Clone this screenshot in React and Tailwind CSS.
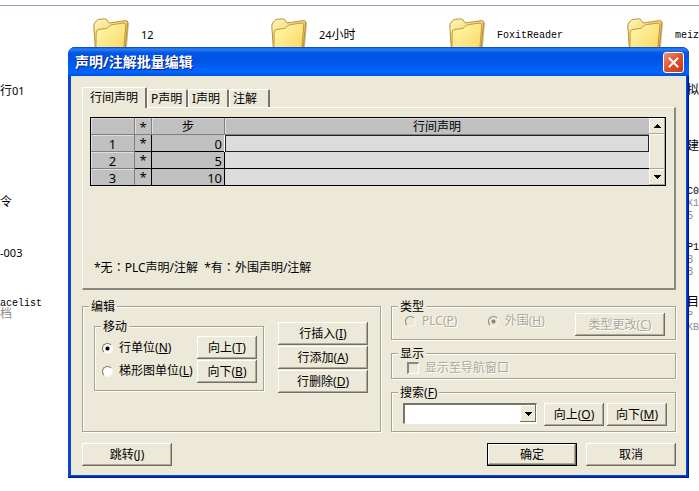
import { useState } from 'react'

const FOLDERS = [
    { name: '12', pos: 'left-[93px]' },
    { name: '24小时', pos: 'left-[271px]' },
    { name: 'FoxitReader', pos: 'left-[449px]' },
    { name: 'meiz', pos: 'left-[627px]' },
]

// files of the explorer window that stick out beside the dialog
const FILES = [
    { text: '行01', pos: 'left-0 top-[83px]' },
    { text: '令', pos: 'left-0 top-[195px]' },
    { text: '-003', pos: 'left-0 top-[245px]' },
    { text: 'acelist', pos: 'left-0 top-[295px]' },
    { text: '档', pos: 'left-0 top-[307px]', dim: true },
    { text: '拟', pos: 'left-[687px] top-[83px]' },
    { text: '建', pos: 'left-[687px] top-[139px]' },
    { text: 'C0', pos: 'left-[687px] top-[183px]' },
    { text: 'X1', pos: 'left-[687px] top-[195px]', dim: true },
    { text: '5', pos: 'left-[687px] top-[207px]', dim: true },
    { text: 'P1', pos: 'left-[687px] top-[239px]' },
    { text: '3', pos: 'left-[687px] top-[251px]', dim: true },
    { text: '3', pos: 'left-[687px] top-[263px]', dim: true },
    { text: '目', pos: 'left-[687px] top-[295px]' },
    { text: 'P', pos: 'left-[687px] top-[307px]', dim: true },
    { text: 'KB', pos: 'left-[687px] top-[319px]', dim: true },
]

const ROWS = [
    { id: 1, step: 0, text: '' },
    { id: 2, step: 5, text: '' },
    { id: 3, step: 10, text: '' },
]

const TABS = ['行间声明', 'P声明', 'I声明', '注解']

// chinese glyphs are 12px, latin ones sit on a 6px grid
function DesktopText({ children }) {
    return children.split(/([\x20-\x7e]+)/).map((part, i) => {
        if (/^[-\d]+$/.test(part)) {
            return <span key={i} className="font-['Noto_Sans',sans-serif] text-[11px]">{part}</span>
        }
        if (/^[\x20-\x7e]+$/.test(part)) {
            return <span key={i} className="text-[10px]">{part}</span>
        }
        return part
    })
}

function FolderIcon() {
    return (
        <svg width="38" height="36" viewBox="0 0 38 36" className="shrink-0">
            <defs>
                <linearGradient id="folderBack" x1="0" y1="0" x2="1" y2="1">
                    <stop offset="0" stopColor="#fff8b8" />
                    <stop offset="1" stopColor="#e8b848" />
                </linearGradient>
                <linearGradient id="folderFront" x1="0" y1="0" x2="1" y2="1">
                    <stop offset="0" stopColor="#fff9b4" />
                    <stop offset="1" stopColor="#fbd65c" />
                </linearGradient>
            </defs>
            <path d="M34.5 4 L36 5 L33.5 34 L30 34 Z" fill="#9a8a60" opacity="0.6" />
            <path d="M2.5 33 L0.8 8 Q0.6 6 2.5 4 L3.6 2.6 Q4.5 1.5 6.5 1.3 L11.5 0.8 Q14 0.8 14.8 3 L16.2 5 L32.5 2.6 Q35 2.4 34.7 5 L32 33 Z" fill="url(#folderBack)" stroke="#b98f35" strokeWidth="1" />
            <path d="M2.8 34 L3.2 14 Q3.5 11.6 6 11.4 L13 10.5 Q14.6 10.2 15.6 8.8 Q17 7 19.5 6.6 L31 5 Q33 4.8 32.8 7 L30.5 34 Z" fill="url(#folderFront)" stroke="#c9942e" strokeWidth="1" />
        </svg>
    )
}

function Button({ children, primary, disabled, className = '' }) {
    return (
        <button
            type="button"
            disabled={disabled}
            className={`h-[23px] flex items-center justify-center whitespace-nowrap bg-[#ece9d8] disabled:text-[#aca899] disabled:[text-shadow:1px_1px_0_#fff] shadow-[inset_-1px_-1px_0_#716f64,inset_1px_1px_0_#fff,inset_-2px_-2px_0_#aca899] ${primary ? 'border border-black' : ''} ${className}`}
        >
            <span>{children}</span>
        </button>
    )
}

function Group({ title, children, className = '' }) {
    return (
        <fieldset className={`min-w-0 border border-[#a5a292] shadow-[1px_1px_0_#fff,inset_1px_1px_0_#fff] ${className}`}>
            <legend className="ml-[6px] px-[2px] h-[13px] leading-[13px] bg-[#ece9d8]">{title}</legend>
            {children}
        </fieldset>
    )
}

function Radio({ label, ...props }) {
    return (
        <label className="flex items-center gap-[6px] h-4 whitespace-nowrap has-disabled:text-[#aca899] has-disabled:[text-shadow:1px_1px_0_#fff]">
            <input
                type="radio"
                className="appearance-none shrink-0 w-[11px] h-[11px] rounded-full bg-white border border-t-[#77756a] border-l-[#77756a] border-b-[#f8f6ee] border-r-[#f8f6ee] checked:bg-[radial-gradient(circle,#000_1.5px,#fff_2.5px)] disabled:bg-[#ece9d8] disabled:border-t-[#8a887c] disabled:border-l-[#8a887c] disabled:checked:bg-[radial-gradient(circle,#8a887c_1.5px,#ece9d8_2.5px)]"
                {...props}
            />
            <span>{label}</span>
        </label>
    )
}

function Key({ k }) {
    return <>(<u>{k}</u>)</>
}

// colon that sits in the middle of its square
function Colon() {
    return <span className="font-['Noto_Sans_CJK_TC',sans-serif]">：</span>
}

function ScrollButton({ up }) {
    return (
        <button
            type="button"
            aria-label={up ? 'up' : 'down'}
            className="h-4 w-4 flex items-center justify-center bg-[#ece9d8] shadow-[inset_-1px_-1px_0_#aca899,inset_1px_1px_0_#fff]"
        >
            <svg width="7" height="4" viewBox="0 0 7 4" shapeRendering="crispEdges">
                <path d={up ? 'M0 4 L3.5 0 L7 4 Z' : 'M0 0 L7 0 L3.5 4 Z'} />
            </svg>
        </button>
    )
}

function StatementTable() {
    const head = 'font-normal pt-[2px] bg-[#c0c0c0] border-r border-b border-[#808080] shadow-[inset_1px_1px_0_#dfdfdf]'
    const cell = 'border-r border-b border-black group-last:border-b-0'
    return (
        <div className="flex border border-black bg-[#ece9d8]">
            <table className="flex-1 table-fixed border-separate border-spacing-0 text-[13px] leading-[14px]">
                <colgroup>
                    <col className="w-[44px]" />
                    <col className="w-[17px]" />
                    <col className="w-[73px]" />
                    <col />
                </colgroup>
                <thead>
                    <tr className="h-[17px]">
                        <th className={head}></th>
                        <th className={head}>*</th>
                        <th className={`${head} text-xs leading-[14px]`}>步</th>
                        <th className={`${head} text-xs leading-[14px] border-r-0`}>行间声明</th>
                    </tr>
                </thead>
                <tbody>
                    {ROWS.map((row, i) => (
                        <tr key={row.id} className="group h-[17px] last:h-4">
                            <th className={`${head} group-last:border-b-0`}>{row.id}</th>
                            <td className={`${cell} bg-[#c0c0c0] text-center`}>*</td>
                            <td className={`${cell} bg-[#c0c0c0] text-right pt-px pr-[2px]`}>{row.step}</td>
                            <td
                                className={
                                    i === 0
                                        ? 'bg-[#dcdcdc] border border-[#222] shadow-[0_1px_0_#fff,-1px_0_0_#fff]'
                                        : `${cell} bg-[#dcdcdc] border-r-0`
                                }
                            >
                                {row.text}
                            </td>
                        </tr>
                    ))}
                </tbody>
            </table>
            <div className="w-4 flex flex-col">
                <ScrollButton up />
                <div className="flex-1 bg-[#ece9d8] shadow-[inset_-1px_-1px_0_#aca899,inset_1px_1px_0_#fff]" />
                <ScrollButton />
            </div>
        </div>
    )
}

function Dialog() {
    const [tab, setTab] = useState(0)
    const [unit, setUnit] = useState('row')

    return (
        <div
            role="dialog"
            className="absolute left-[68px] right-[10px] top-[47px] rounded-t-[7px] overflow-hidden bg-[#0b46d6] shadow-[inset_-1px_-1px_0_#00198c,inset_-2px_-2px_0_#0030b8] font-['Noto_Sans','Noto_Sans_CJK_SC',sans-serif] text-xs leading-4 text-black"
        >
            <div className="h-[29px] pl-[7px] pr-[5px] flex items-center justify-between bg-[linear-gradient(#0a3fc0,#2b82f8_2px,#0055e5_6px,#0055e5_14px,#0066ff_25px,#0050e0)]">
                <h1 className="text-sm font-bold text-white [text-shadow:1px_1px_0_#0a1883]">声明/注解批量编辑</h1>
                <button
                    type="button"
                    aria-label="close"
                    className="mt-[2px] w-[21px] h-[21px] flex items-center justify-center rounded-[3px] border border-white bg-linear-to-br from-[#ee8f70] via-[#e0502c] to-[#c83a10]"
                >
                    <svg width="11" height="11" viewBox="0 0 11 11" stroke="#fff" strokeWidth="2" strokeLinecap="square">
                        <path d="M1.5 1.5 L9.5 9.5 M9.5 1.5 L1.5 9.5" />
                    </svg>
                </button>
            </div>

            <div className="mx-[3px] mb-[3px] bg-[#ece9d8] pt-[11px] pl-[11px] pr-[10px] pb-[9px]">
                <div role="tablist" className="flex items-end">
                    {TABS.map((name, i) => (
                        <button
                            key={name}
                            type="button"
                            role="tab"
                            aria-selected={i === tab}
                            onClick={() => setTab(i)}
                            className={`relative text-left whitespace-nowrap bg-[#ece9d8] border-t border-l border-t-white border-l-white border-r-2 border-r-[#77756a] rounded-t-[2px] ${i === tab ? 'z-10 h-[21px] -mb-px px-[7px]' : 'h-[18px] min-w-[41px] px-[3px]'}`}
                        >
                            {name}
                        </button>
                    ))}
                </div>

                <div
                    role="tabpanel"
                    className="min-h-[183px] flex flex-col justify-between border-t border-l border-white border-r-2 border-b-2 border-r-[#8a887c] border-b-[#8a887c] pt-[9px] pl-[7px] pr-2 pb-3"
                >
                    <StatementTable />
                    <p className="pl-1 whitespace-pre">*无<Colon />PLC声明/注解  *有<Colon />外围声明/注解</p>
                </div>

                <div className="mt-[10px] grid grid-cols-[299fr_285fr] gap-[10px]">
                    <Group title="编辑">
                        <div className="pt-[7px] pl-[11px] pr-3 flex items-start justify-between">
                            <Group title="移动" className="w-[170px] pb-[7px]">
                                <div className="pt-[3px] pl-[7px] pr-[6px] flex justify-between">
                                    <div className="flex flex-col gap-[7px] pt-[4px]">
                                        <Radio name="unit" checked={unit === 'row'} onChange={() => setUnit('row')} label={<>行单位<Key k="N" /></>} />
                                        <Radio name="unit" checked={unit === 'ladder'} onChange={() => setUnit('ladder')} label={<>梯形图单位<Key k="L" /></>} />
                                    </div>
                                    <div className="flex flex-col gap-px">
                                        <Button className="w-[60px]">向上<Key k="T" /></Button>
                                        <Button className="w-[60px]">向下<Key k="B" /></Button>
                                    </div>
                                </div>
                            </Group>
                            <div className="pt-[2px] flex flex-col gap-px">
                                <Button className="w-[90px]">行插入<Key k="I" /></Button>
                                <Button className="w-[90px]">行添加<Key k="A" /></Button>
                                <Button className="w-[90px]">行删除<Key k="D" /></Button>
                            </div>
                        </div>
                    </Group>

                    <div className="flex flex-col gap-[7px]">
                        <Group title="类型" className="pb-[3px]">
                            <div className="pl-[13px] pr-[10px] flex items-start justify-between">
                                <Radio name="kind" disabled label={<>PLC<Key k="P" /></>} />
                                <Radio name="kind" disabled defaultChecked label={<>外围<Key k="H" /></>} />
                                <Button disabled className="w-[90px]">类型更改<Key k="C" /></Button>
                            </div>
                        </Group>
                        <Group title="显示" className="pb-[3px]">
                            <label className="ml-[15px] h-[15px] flex items-center gap-[6px] text-[#aca899] [text-shadow:1px_1px_0_#fff]">
                                <input
                                    type="checkbox"
                                    disabled
                                    className="appearance-none w-3 h-3 border-t-2 border-l-2 border-r border-b border-t-[#8a887c] border-l-[#8a887c] border-r-white border-b-white"
                                />
                                显示至导航窗口
                            </label>
                        </Group>
                        <Group title={<label htmlFor="search">搜索<Key k="F" /></label>} className="pb-[5px]">
                            <div className="pt-[4px] pl-[11px] pr-[8px] flex items-start">
                                <div className="relative flex-1 mr-[7px]">
                                    <select
                                        id="search"
                                        className="block appearance-none w-full h-[21px] bg-white border-t-2 border-l-2 border-r border-b border-t-[#77756a] border-l-[#77756a] border-r-white border-b-white"
                                    >
                                        <option></option>
                                    </select>
                                    <span className="pointer-events-none absolute right-px top-[2px] w-4 h-[17px] flex items-center justify-center bg-[#ece9d8] shadow-[inset_-1px_-1px_0_#716f64,inset_1px_1px_0_#fff]">
                                        <svg width="7" height="4" viewBox="0 0 7 4" shapeRendering="crispEdges">
                                            <path d="M0 0 L7 0 L3.5 4 Z" />
                                        </svg>
                                    </span>
                                </div>
                                <Button className="w-[60px] mr-[3px]">向上<Key k="O" /></Button>
                                <Button className="w-[60px]">向下<Key k="M" /></Button>
                            </div>
                        </Group>
                    </div>
                </div>

                <div className="mt-[11px] flex gap-[9px]">
                    <Button className="w-[90px] mr-auto">跳转<Key k="J" /></Button>
                    <Button primary className="w-[90px]">确定</Button>
                    <Button className="w-[90px]">取消</Button>
                </div>
            </div>
        </div>
    )
}

export default function App() {
    return (
        <main className="relative h-screen overflow-hidden bg-white font-['Liberation_Mono','Noto_Sans_CJK_SC',monospace] text-xs leading-4 text-black">
            <div className="h-[6px] border-b border-[#9a9cc4]" />
            {FOLDERS.map((f) => (
                <div key={f.name} className={`absolute top-[18px] flex gap-[10px] ${f.pos}`}>
                    <FolderIcon />
                    <span className="mt-[9px] whitespace-nowrap"><DesktopText>{f.name}</DesktopText></span>
                </div>
            ))}
            {FILES.map((f, i) => (
                <span key={i} className={`absolute whitespace-nowrap ${f.pos} ${f.dim ? 'text-[#8c8c8c]' : ''}`}>
                    <DesktopText>{f.text}</DesktopText>
                </span>
            ))}
            <Dialog />
        </main>
    )
}
